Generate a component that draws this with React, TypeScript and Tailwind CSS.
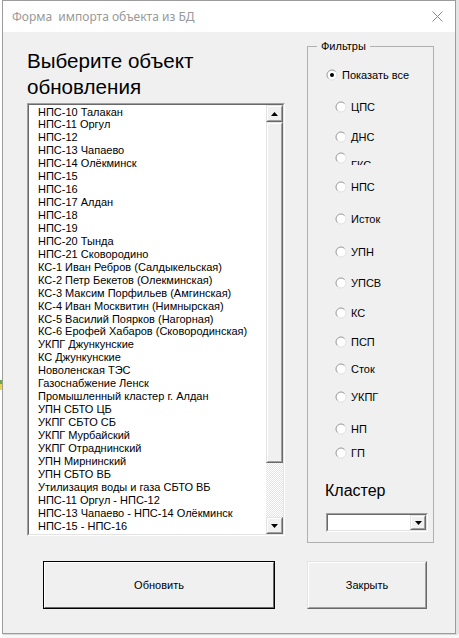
import React from "react";

const items = [
  "НПС-10 Талакан",
  "НПС-11 Оргул",
  "НПС-12",
  "НПС-13 Чапаево",
  "НПС-14 Олёкминск",
  "НПС-15",
  "НПС-16",
  "НПС-17 Алдан",
  "НПС-18",
  "НПС-19",
  "НПС-20 Тында",
  "НПС-21 Сковородино",
  "КС-1 Иван Ребров (Салдыкельская)",
  "КС-2 Петр Бекетов (Олекминская)",
  "КС-3 Максим Порфильев (Амгинская)",
  "КС-4 Иван Москвитин (Нимнырская)",
  "КС-5 Василий Поярков (Нагорная)",
  "КС-6 Ерофей Хабаров (Сковородинская)",
  "УКПГ Джункунские",
  "КС Джункунские",
  "Новоленская ТЭС",
  "Газоснабжение Ленск",
  "Промышленный кластер г. Алдан",
  "УПН СБТО ЦБ",
  "УКПГ СБТО СБ",
  "УКПГ Мурбайский",
  "УКПГ Отраднинский",
  "УПН Мирнинский",
  "УПН СБТО ВБ",
  "Утилизация воды и газа СБТО ВБ",
  "НПС-11 Оргул - НПС-12",
  "НПС-13 Чапаево - НПС-14 Олёкминск",
  "НПС-15 - НПС-16",
];

function Radio({ checked }: { checked?: boolean }) {
  return (
    <svg width="12" height="12" viewBox="0 0 12 12" className="shrink-0">
      <circle cx="6" cy="6" r="5" fill="#ffffff" stroke="#e2e2e2" strokeWidth="1" />
      <path d="M2.46 9.54 A5 5 0 0 1 9.54 2.46" fill="none" stroke="#a0a0a0" strokeWidth="1" />
      {checked && <circle cx="6" cy="6" r="2" fill="#000000" />}
    </svg>
  );
}

function Tri({ up }: { up?: boolean }) {
  return (
    <svg width="7" height="4" viewBox="0 0 7 4">
      {up ? <path d="M3.5 0 L7 4 L0 4 Z" fill="#000" /> : <path d="M0 0 L7 0 L3.5 4 Z" fill="#000" />}
    </svg>
  );
}

function Raised({ className, children }: { className?: string; children?: React.ReactNode }) {
  return (
    <div className={"border border-t-[#e3e3e3] border-l-[#e3e3e3] border-b-[#696969] border-r-[#696969] " + (className ?? "")}>
      <div className="w-full h-full border border-t-white border-l-white border-b-[#a0a0a0] border-r-[#a0a0a0] bg-[#f0f0f0] flex items-center justify-center">
        {children}
      </div>
    </div>
  );
}

function Sunken({ className, children }: { className?: string; children?: React.ReactNode }) {
  return (
    <div className={"border border-t-[#a0a0a0] border-l-[#a0a0a0] border-b-white border-r-white " + (className ?? "")}>
      <div className="w-full h-full border border-t-[#696969] border-l-[#696969] border-b-[#e3e3e3] border-r-[#e3e3e3] bg-white flex">
        {children}
      </div>
    </div>
  );
}

type R = { label: string; mt: string; ml: string; checked?: boolean; clipped?: boolean };

const radios: R[] = [
  { label: "Показать все", mt: "mt-[21px]", ml: "ml-[18px]", checked: true },
  { label: "ЦПС", mt: "mt-[18px]", ml: "ml-[27px]" },
  { label: "ДНС", mt: "mt-[16px]", ml: "ml-[27px]" },
  { label: "ГКС", mt: "mt-[7px]", ml: "ml-[27px]", clipped: true },
  { label: "НПС", mt: "mt-[15px]", ml: "ml-[27px]" },
  { label: "Исток", mt: "mt-[18px]", ml: "ml-[27px]" },
  { label: "УПН", mt: "mt-[19px]", ml: "ml-[27px]" },
  { label: "УПСВ", mt: "mt-[17px]", ml: "ml-[27px]" },
  { label: "КС", mt: "mt-[16px]", ml: "ml-[27px]" },
  { label: "ПСП", mt: "mt-[15px]", ml: "ml-[27px]" },
  { label: "Сток", mt: "mt-[13px]", ml: "ml-[27px]" },
  { label: "УКПГ", mt: "mt-[14px]", ml: "ml-[27px]" },
  { label: "НП", mt: "mt-[18px]", ml: "ml-[27px]" },
  { label: "ГП", mt: "mt-[10px]", ml: "ml-[27px]" },
];

export default function App() {
  return (
    <div className="w-[459px] h-[638px] bg-[#f7f7f7] flex overflow-hidden font-['Liberation_Sans',Arial,sans-serif] text-black">
      <div className="w-[2px] h-full bg-white flex flex-col">
        <div className="mt-[380px] h-[4px] bg-[#6aa84f]" />
        <div className="h-[6px] bg-[#e8d44d]" />
      </div>
      <div className="w-[454px] h-[634px] border border-[#9c9c9c] flex flex-col shadow-[1px_1px_0_#d8d8d8]">
        {/* title bar */}
        <div className="h-[31px] bg-white flex items-center justify-between pl-[9px] pr-[12px]">
          <span className="font-['Noto_Sans',sans-serif] text-[12px] text-[#999999] whitespace-pre">Форма  импорта объекта из БД</span>
          <svg width="11" height="11" viewBox="0 0 11 11">
            <path d="M0.5 0.5 L10.5 10.5 M10.5 0.5 L0.5 10.5" stroke="#8a8a8a" strokeWidth="1" />
          </svg>
        </div>
        {/* body */}
        <div className="flex-1 bg-[#f0f0f0] flex flex-col">
          <div className="flex items-start pt-[14px] pl-[24px]">
            {/* left column */}
            <div className="w-[258px] flex flex-col mt-[2px]">
              <div className="text-[20.6px] leading-[26px]">
                Выберите объект
                <br />
                обновления
              </div>
              <Sunken className="mt-[3px] h-[433px] w-[258px]">
                <div className="flex-1 pl-[9px] pt-[0.5px] text-[11px] leading-[12.94px] overflow-hidden">
                  {items.map((it) => (
                    <div key={it} className="whitespace-nowrap">{it}</div>
                  ))}
                </div>
                <div className="w-[17px] flex flex-col">
                  <Raised className="h-[17px]">
                    <Tri up />
                  </Raised>
                  <Raised className="h-[341px]" />
                  <div className="flex-1 bg-[repeating-conic-gradient(#ffffff_0%_25%,#e4e4e4_0%_50%)] bg-[length:2px_2px]" />
                  <Raised className="h-[17px]">
                    <Tri />
                  </Raised>
                </div>
              </Sunken>
            </div>
            {/* filters group */}
            <div className="ml-[22px] w-[127px] h-[497px] border border-[#b0b0b0] relative flex flex-col text-[11px]">
              <span className="absolute left-[9px] top-[-8px] bg-[#f0f0f0] px-[4px] leading-[14px]">Фильтры</span>
              {radios.map((r) => (
                <div key={r.label} className={"flex items-center h-[14px] " + r.mt + " " + r.ml}>
                  <Radio checked={r.checked} />
                  {r.clipped ? (
                    <div className="ml-[4px] h-[14px] overflow-hidden pt-[7px] leading-[14px]">{r.label}</div>
                  ) : (
                    <span className="ml-[4px] leading-[14px]">{r.label}</span>
                  )}
                </div>
              ))}
              <div className="mt-[21px] ml-[17px] text-[16px] leading-[20px]">Кластер</div>
              <Sunken className="mt-[12px] ml-[18px] w-[102px] h-[19px]">
                <div className="flex-1" />
                <Raised className="w-[16px] h-full">
                  <Tri />
                </Raised>
              </Sunken>
            </div>
          </div>
          {/* buttons */}
          <div className="flex mt-[18px] pl-[40px] text-[11px]">
            <div className="w-[232px] h-[48px] border border-black">
              <div className="w-full h-full border border-t-white border-l-white border-b-[#696969] border-r-[#696969] flex items-center justify-center">
                Обновить
              </div>
            </div>
            <Raised className="ml-[32px] w-[120px] h-[48px]">Закрыть</Raised>
          </div>
        </div>
      </div>
      <div className="w-[3px] h-[634px] bg-[#e4e4e4]" />
    </div>
  );
}
